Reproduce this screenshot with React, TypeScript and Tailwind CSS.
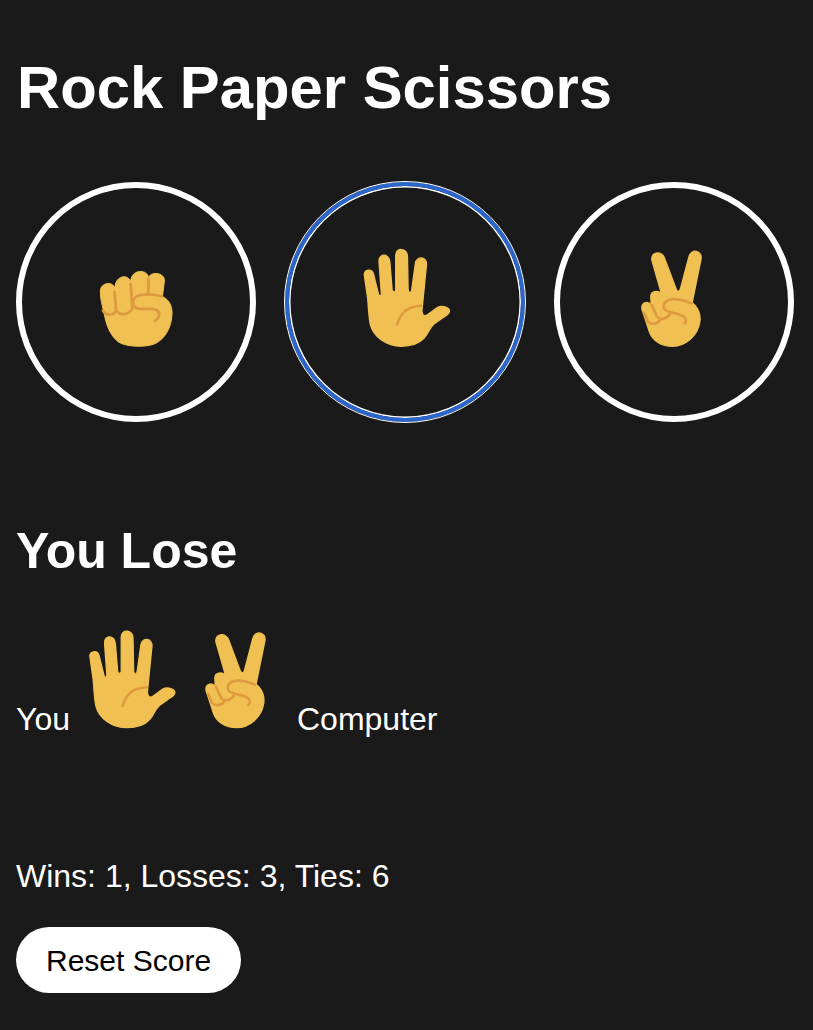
import React from 'react';

const skin = '#F0C052';
const crease = '#DF9A3F';

function Fist({ className }: { className: string }) {
  return (
    <svg viewBox="56 303 224 234" className={className}>
      <path
        fill={skin}
        stroke={skin}
        strokeWidth="3"
        strokeLinejoin="round"
        d="M60 368 C59 338 100 335 104 358 C104 318 144 312 152 338 C152 298 204 298 206 326 C210 305 256 308 254 335 L248 382 C268 392 278 410 277 435 C276 475 255 512 225 525 C200 536 140 536 115 520 C90 500 78 470 72 435 C66 410 60 390 60 368 Z"
      />
      <g fill="none" stroke={crease} strokeWidth="8.5" strokeLinecap="round" strokeLinejoin="round">
        <path d="M68 425 C78 441 100 441 108 424 L103 368" />
        <path d="M108 424 C118 441 145 439 157 418 L152 345" />
        <path d="M206 328 L205 376" />
        <path d="M246 382 C225 376 190 372 170 382 C155 392 155 412 172 418 C190 424 215 414 232 424 C243 432 238 448 226 456" />
      </g>
    </svg>
  );
}

function Hand({ className }: { className: string }) {
  return (
    <svg viewBox="68 54 269 303" className={className}>
      <path
        fill={skin}
        stroke={skin}
        strokeWidth="4"
        strokeLinejoin="round"
        d="M72 135 C70 118 95 115 100 132 L115 192 C118 202 124 200 124 192 L117 95 C115 68 148 68 150 95 L157 180 C158 190 168 188 168 180 L168 75 C168 50 204 52 204 78 L206 180 C208 192 215 192 217 180 L228 100 C232 75 265 78 262 105 L248 245 C250 262 258 262 267 255 L295 235 C310 226 335 235 332 247 C330 257 320 260 310 267 L285 285 C270 298 270 312 255 328 C235 350 205 353 185 353 C140 353 100 325 90 285 C85 260 85 235 82 205 Z"
      />
      <path
        fill="none"
        stroke={crease}
        strokeWidth="7.5"
        strokeLinecap="round"
        d="M172 287 C182 250 205 230 246 229"
      />
    </svg>
  );
}

function Victory({ className }: { className: string }) {
  return (
    <svg viewBox="56 42 192 300" className={className}>
      <path
        fill={skin}
        stroke={skin}
        strokeWidth="4"
        strokeLinejoin="round"
        d="M92 75 C88 48 125 45 132 72 L165 160 C169 174 177 174 180 160 L205 65 C212 38 247 45 242 72 L215 205 C235 220 242 245 238 265 C232 305 195 338 155 338 C120 338 95 320 85 295 L62 225 C58 203 80 198 90 212 L89 190 C86 168 112 165 122 180 Z"
      />
      <g fill="none" stroke={crease} strokeWidth="8" strokeLinecap="round" strokeLinejoin="round">
        <path d="M212 207 C195 198 165 190 145 196 C128 202 122 218 135 228 C150 238 175 236 190 248 C198 255 197 264 192 268" />
        <path d="M92 212 L108 248 C118 258 135 256 147 240" />
        <path d="M68 235 L80 262 C90 272 108 272 118 257" />
      </g>
    </svg>
  );
}

export default function App() {
  return (
    <div className="min-h-screen bg-[#1a1a1a] px-4 pt-[53px] text-white font-['Liberation_Sans',Arial,sans-serif]">
      <h1 className="pl-[1px] text-[59.8px] leading-[70px] font-bold">Rock Paper Scissors</h1>

      <div className="mt-[59px] flex gap-[29px]">
        <button className="flex h-[240px] w-[240px] items-end justify-center rounded-full border-[6px] border-white pb-[68px]">
          <Fist className="h-[78px] w-[74px]" />
        </button>
        <button className="flex h-[240px] w-[240px] items-end justify-center rounded-full border-[4px] border-[#2a66cc] pb-[70px] outline-[1.5px] outline-white shadow-[inset_0_0_0_1.5px_#ffffff]">
          <Hand className="ml-[3px] h-[100px] w-[88px]" />
        </button>
        <button className="flex h-[240px] w-[240px] items-end justify-center rounded-full border-[6px] border-white pb-[68px]">
          <Victory className="mr-[6px] h-[99px] w-[63px]" />
        </button>
      </div>

      <h2 className="mt-[99px] text-[50px] leading-[60px] font-bold">You Lose</h2>

      <div className="mt-[49px] flex items-end text-[32px] leading-[36px]">
        <span className="-mb-[8px]">You</span>
        <Hand className="ml-[18px] h-[99px] w-[89px]" />
        <Victory className="ml-[27px] h-[98px] w-[63px]" />
        <span className="ml-[30px] -mb-[8px]">Computer</span>
      </div>

      <p className="mt-[129px] text-[32px] leading-[36px]">Wins: 1, Losses: 3, Ties: 6</p>

      <button className="mt-[33px] block h-[66px] rounded-full bg-white px-[30px] text-[30px] text-black">
        Reset Score
      </button>
    </div>
  );
}
